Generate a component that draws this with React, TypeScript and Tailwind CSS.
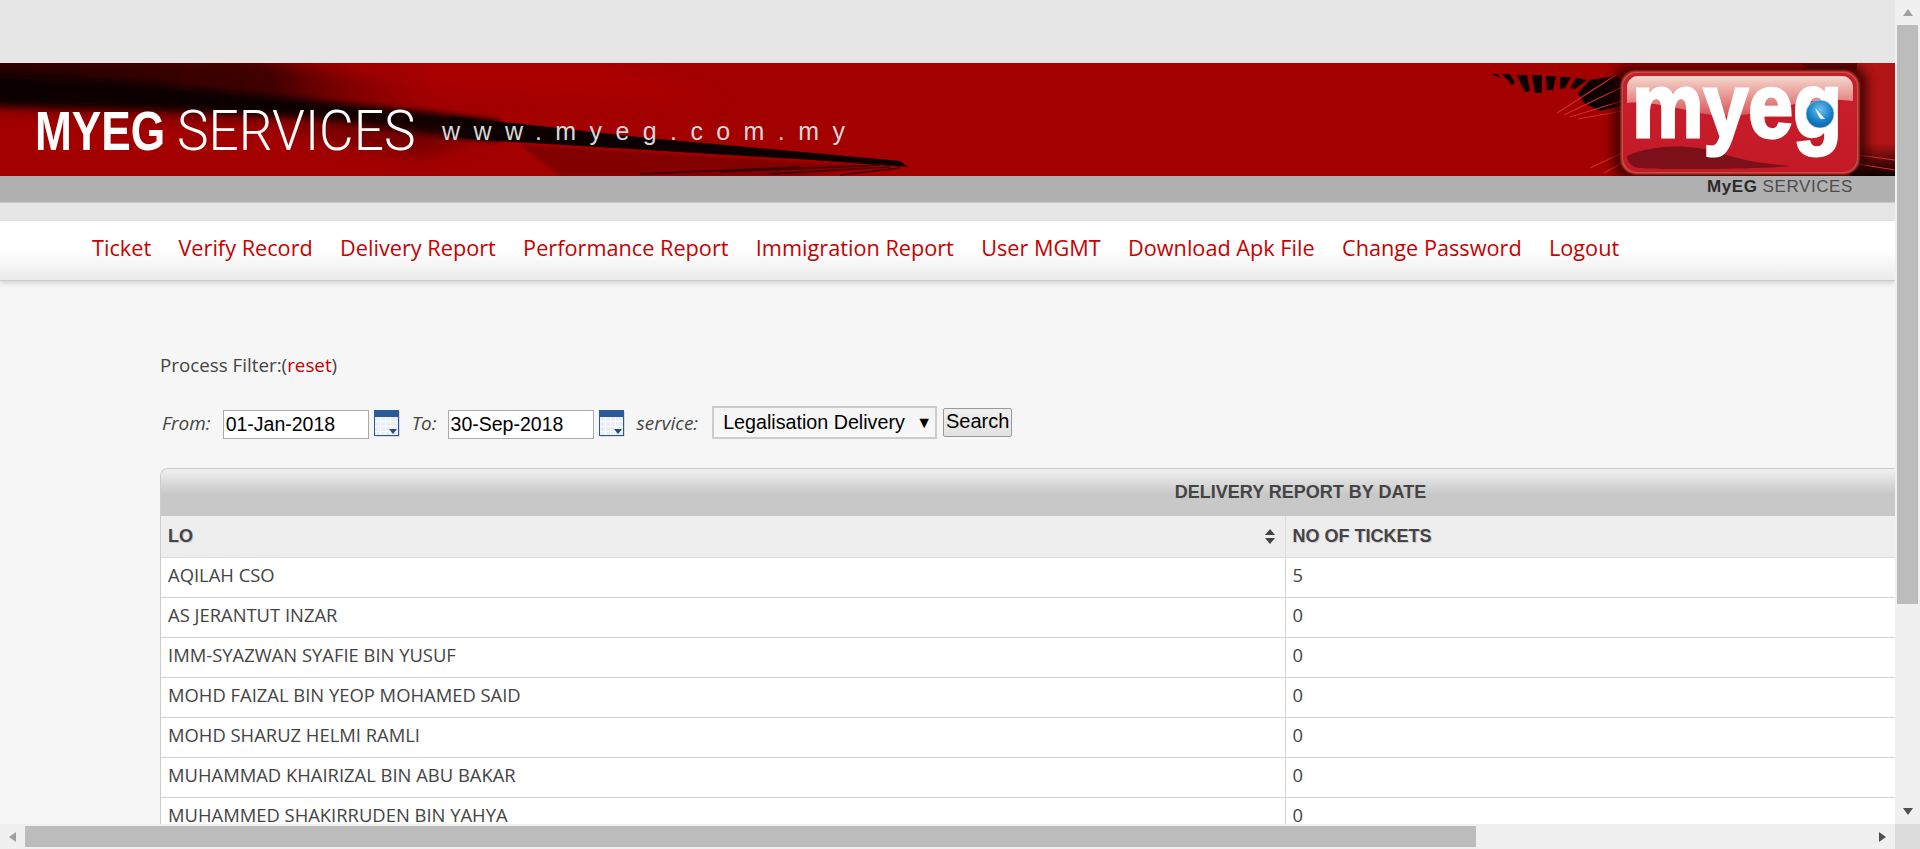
const navItems = ['Ticket', 'Verify Record', 'Delivery Report', 'Performance Report', 'Immigration Report', 'User MGMT', 'Download Apk File', 'Change Password', 'Logout']

const rows = [
  ['AQILAH CSO', '5'],
  ['AS JERANTUT INZAR', '0'],
  ['IMM-SYAZWAN SYAFIE BIN YUSUF', '0'],
  ['MOHD FAIZAL BIN YEOP MOHAMED SAID', '0'],
  ['MOHD SHARUZ HELMI RAMLI', '0'],
  ['MUHAMMAD KHAIRIZAL BIN ABU BAKAR', '0'],
  ['MUHAMMED SHAKIRRUDEN BIN YAHYA', '0'],
]

const CalendarIcon = () => (
  <svg width="26" height="27" viewBox="0 0 26 27" className="ml-[5px] mt-[4px] shrink-0">
    <rect x="1.500" y="1.500" width="24" height="25" fill="#b8bec8" />
    <rect x="0" y="0" width="25" height="26" fill="#2b5a9a" />
    <rect x="1" y="7" width="23" height="18" fill="#e9eef7" />
    <path d="M6.500 7v18M11.500 7v18M16.500 7v18M1 11.500h23M1 16.500h23M1 21.500h23" stroke="#fff" strokeWidth="1" />
    <path d="M15 19h8l-4 5z" fill="#2b4a80" />
  </svg>
)

const Triangle = ({ dir, color }: { dir: 'up' | 'down' | 'left' | 'right'; color: string }) => {
  const points = { up: '0,7 5,0 10,7', down: '0,0 10,0 5,7', left: '7,0 7,10 0,5', right: '0,0 0,10 7,5' }[dir]
  const vertical = dir === 'up' || dir === 'down'
  return (
    <svg width={vertical ? 10 : 7} height={vertical ? 7 : 10} viewBox={vertical ? '0 0 10 7' : '0 0 7 10'}>
      <polygon points={points} fill={color} />
    </svg>
  )
}

const SortIcon = () => (
  <svg width="10" height="15" viewBox="0 0 10 15">
    <polygon points="0,6 5,0 10,6" fill="#444" />
    <polygon points="0,9 10,9 5,15" fill="#444" />
  </svg>
)

// banner artwork: dark streak on the left, sun rays and the logo plate on the right
const BannerArt = () => (
  <svg width="1895" height="113" viewBox="0 0 1895 113" className="absolute inset-0">
    <defs>
      <linearGradient id="fade" x1="0" x2="1" y1="0" y2="0">
        <stop offset="0" stopColor="#200000" />
        <stop offset="0.6" stopColor="#300000" stopOpacity="0.85" />
        <stop offset="1" stopColor="#a30000" stopOpacity="0" />
      </linearGradient>
      <linearGradient id="plate" x1="0" x2="0" y1="0" y2="1">
        <stop offset="0" stopColor="#c91e2c" />
        <stop offset="1" stopColor="#c41a28" />
      </linearGradient>
      <linearGradient id="gloss" x1="0" x2="0" y1="0" y2="1">
        <stop offset="0" stopColor="#f6d8cc" />
        <stop offset="1" stopColor="#d8555a" />
      </linearGradient>
      <linearGradient id="rightDark" x1="0" x2="0" y1="0" y2="1">
        <stop offset="0" stopColor="#0a0000" stopOpacity="0" />
        <stop offset="1" stopColor="#0a0000" />
      </linearGradient>
      <radialGradient id="dot" cx="0.5" cy="0.35" r="0.7">
        <stop offset="0" stopColor="#6fc0ee" />
        <stop offset="0.6" stopColor="#1580c8" />
        <stop offset="1" stopColor="#0c5c9c" />
      </radialGradient>
      <filter id="wide" x="-20%" y="-50%" width="140%" height="200%"><feGaussianBlur stdDeviation="9" /></filter>
      <filter id="soft" x="-20%" y="-50%" width="140%" height="200%"><feGaussianBlur stdDeviation="3" /></filter>
      <filter id="softer"><feGaussianBlur stdDeviation="1" /></filter>
      <filter id="fine"><feGaussianBlur stdDeviation="0.600" /></filter>
      <filter id="glow"><feGaussianBlur stdDeviation="5" /></filter>
    </defs>
    <rect width="1895" height="113" fill="#a30000" />
    <path d="M-20 -10H240L400 20L470 52V66L-20 40z" fill="url(#fade)" filter="url(#wide)" />
    <path d="M400 0H600L720 40L440 24z" fill="#b40000" opacity="0.6" filter="url(#wide)" />
    <path d="M-10 12L120 18L260 32L420 48L500 58L500 78L420 72L300 54L160 46L-10 42z" fill="#0a0000" filter="url(#soft)" />
    <path d="M300 54L480 76L420 92L300 72z" fill="#5a0000" opacity="0.7" filter="url(#wide)" />
    <path d="M450 53L647 75L813 90L900 98L908 104L813 97L647 87L480 77L450 74z" fill="#0c0000" filter="url(#fine)" />
    <path d="M520 82L880 104L800 113H560z" fill="#6a0000" opacity="0.55" filter="url(#softer)" />
    <path d="M720 109L880 102M770 111L890 104M640 111L800 104M840 112L900 105" stroke="#3c0000" strokeWidth="1.500" />
    <path d="M1492 11H1498L1500 15zM1502 11H1510L1515 20L1512 22zM1517 12H1527L1530 28L1525 29zM1532 12H1542V30H1535zM1546 13H1556L1553 27H1547zM1560 14H1571L1565 25L1560 26zM1576 15L1587 17L1575 26L1570 25z" fill="#0d0202" />
    <path d="M1590 17L1616 13L1624 18V42L1600 48L1584 40L1578 30z" fill="#0d0202" filter="url(#fine)" />
    <path d="M1557 50L1616 12M1564 52L1622 24M1570 54L1622 38M1578 56L1622 48M1590 105L1622 90M1604 110L1622 100" stroke="#d42a2a" strokeWidth="1.200" />
    <path d="M1800 0H1895V6H1810z" fill="#6a0808" />
    <rect x="1857" y="0" width="38" height="113" fill="#b01414" />
    <rect x="1850" y="80" width="45" height="33" fill="url(#rightDark)" />
    <path d="M1858 92L1895 97M1858 101L1895 107" stroke="#d83030" strokeWidth="1" />
    <rect x="1612" y="2" width="256" height="114" rx="18" fill="#2a0404" opacity="0.7" filter="url(#glow)" />
    <rect x="1621" y="8" width="238" height="103" rx="15" fill="#e2604e" opacity="0.9" filter="url(#softer)" />
    <rect x="1623" y="10" width="234" height="99" rx="14" fill="url(#plate)" />
    <path d="M1627 24a11 11 0 0 1 11-11H1842a11 11 0 0 1 11 11V38C1790 30 1760 62 1700 50C1670 44 1650 38 1627 40z" fill="url(#gloss)" />
    <path d="M1627 93C1650 82 1690 80 1720 90C1745 98 1760 100 1790 103C1770 106 1650 107 1640 105C1632 104 1627 100 1627 93z" fill="#7c101a" />
    <text x="1632" y="74" fontFamily="Liberation Sans" fontWeight="700" fontSize="90" textLength="210" lengthAdjust="spacingAndGlyphs" fill="#fff" stroke="#fff" strokeWidth="3">myeg</text>
    <circle cx="1820" cy="51" r="14" fill="url(#dot)" stroke="#e8f2fa" strokeWidth="0.500" />
    <path d="M1815 45L1825 56L1821 56L1819 54z" fill="#fff" />
  </svg>
)

const App = () => {
  return (
    <div className="flex h-[849px] w-[1920px] flex-col overflow-hidden bg-[#f0f0f0] font-['Open_Sans',sans-serif]">
      <div className="flex h-[824px]">
        <div className="w-[1895px] overflow-hidden bg-[#f6f6f6]">
          <div className="h-[63px] bg-[#e6e6e6]" />
          <div className="relative flex h-[113px] w-[1895px] items-start overflow-hidden bg-[#a30000] pl-[35px] pt-[44px] font-['Liberation_Sans',sans-serif] text-white">
            <BannerArt />
            <span className="relative w-[142px] origin-left scale-x-[0.79] text-[56px] leading-[48px] font-bold">MYEG</span>
            <span className="relative w-[265px] origin-left scale-x-[0.95] text-[56px] leading-[48px] font-['Roboto',sans-serif] font-light">SERVICES</span>
            <span className="relative mt-[9px] text-[25px] leading-[30px] tracking-[13.400px] text-[#d8d8d8]">www.myeg.com.my</span>
          </div>
          <div className="flex h-[27px] justify-end border-b border-[#c8c8c8] bg-[#b0b0b0] pr-[42px] font-['Liberation_Sans',sans-serif] text-[17px] leading-[22px] tracking-[0.6px]">
            <span className="font-bold text-[#2b2b2b]">MyEG</span>
            <span className="ml-[5px] text-[#4c4c4c]">SERVICES</span>
          </div>
          <div className="h-[18px] bg-[#e6e6e6]" />
          <nav className="relative flex h-[60px] items-center gap-[27.300px] border-b border-[#cccccc] bg-gradient-to-b from-white from-50% to-[#ebebeb] pb-[5px] pl-[92px] text-[21.700px] text-[#c80000] shadow-[0_2px_5px_#d0d0d0]">
            {navItems.map((item) => (
              <a key={item} href="#">{item}</a>
            ))}
          </nav>
          <div className="pl-[160px] pt-[72px]">
            <p className="text-[18.800px] leading-[24px] text-[#444]">Process Filter:(<a href="#" className="text-[#c80000]">reset</a>)</p>
            <div className="mt-[29px] flex h-[33px] items-start text-[19px] text-[#444]">
              <i className="ml-[2px] mt-[3px]">From:</i>
              <input readOnly value="01-Jan-2018" className="ml-[12px] mt-[4px] h-[29px] w-[146px] border border-[#aaa] bg-white px-[2px] font-['Liberation_Sans',sans-serif] text-[19.500px] text-black" />
              <CalendarIcon />
              <i className="ml-[12px] mt-[3px]">To:</i>
              <input readOnly value="30-Sep-2018" className="ml-[11px] mt-[4px] h-[29px] w-[146px] border border-[#aaa] bg-white px-[2px] font-['Liberation_Sans',sans-serif] text-[19.500px] text-black" />
              <CalendarIcon />
              <i className="ml-[12px] mt-[3px]">service:</i>
              <div className="ml-[14px] flex h-[33px] w-[225px] items-center border-2 border-[#ccc] bg-gradient-to-b from-[#f4f4f4] to-[#f8f8f8] pl-[9px] font-['Liberation_Sans',sans-serif] text-[19.700px] text-black">
                <span className="w-[193px] overflow-hidden whitespace-nowrap">Legalisation Delivery</span>
                <span className="text-[16px]">▼</span>
              </div>
              <button className="ml-[6px] mt-[2px] h-[29px] w-[69px] rounded-[2px] border border-[#999] bg-gradient-to-b from-[#f0f0f0] to-[#e2e2e2] pb-[4px] font-['Liberation_Sans',sans-serif] text-[20px] leading-[24px] text-black">Search</button>
            </div>
            <div className="mt-[29px] w-[2280px] overflow-hidden rounded-tl-[8px] border-l border-t border-[#ccc]">
              <div className="flex h-[47px] items-center justify-center bg-gradient-to-b from-[#f0f0f0] to-[#c8c8c8] to-55% font-['Liberation_Sans',sans-serif] text-[18px] font-bold text-[#444]">DELIVERY REPORT BY DATE</div>
              <table className="w-full table-fixed border-collapse text-[18.400px] text-[#444]">
                <thead>
                  <tr className="h-[41px] bg-[#eee] font-['Liberation_Sans',sans-serif] text-[18px] [text-shadow:1px_1px_0_#ccc]">
                    <th className="w-[1124px] border-b border-r border-[#ddd] px-[7px] text-left">
                      <div className="flex items-center justify-between pr-[3px]">LO<SortIcon /></div>
                    </th>
                    <th className="border-b border-[#ddd] px-[7px] text-left">NO OF TICKETS</th>
                  </tr>
                </thead>
                <tbody>
                  {rows.map(([name, count]) => (
                    <tr key={name} className="h-[40px] bg-white">
                      <td className="border-b border-r border-[#d4d4d4] px-[7px] pb-[4px]">{name}</td>
                      <td className="border-b border-[#d4d4d4] px-[7px] pb-[4px]">{count}</td>
                    </tr>
                  ))}
                </tbody>
              </table>
            </div>
          </div>
        </div>
        <div className="flex w-[25px] flex-col items-center">
          <div className="flex h-[25px] items-center"><Triangle dir="up" color="#a0a0a0" /></div>
          <div className="h-[579px] w-[21px] bg-[#bcbcbc]" />
          <div className="flex-1" />
          <div className="flex h-[24px] items-center pb-[2px]"><Triangle dir="down" color="#505050" /></div>
        </div>
      </div>
      <div className="flex h-[25px] items-center">
        <div className="flex w-[1895px] items-center">
          <div className="flex w-[25px] justify-center"><Triangle dir="left" color="#a0a0a0" /></div>
          <div className="h-[21px] w-[1451px] bg-[#bcbcbc]" />
          <div className="flex-1" />
          <div className="flex w-[25px] justify-center"><Triangle dir="right" color="#505050" /></div>
        </div>
        <div className="h-[25px] w-[25px] bg-[#dcdcdc]" />
      </div>
    </div>
  )
}

export default App
